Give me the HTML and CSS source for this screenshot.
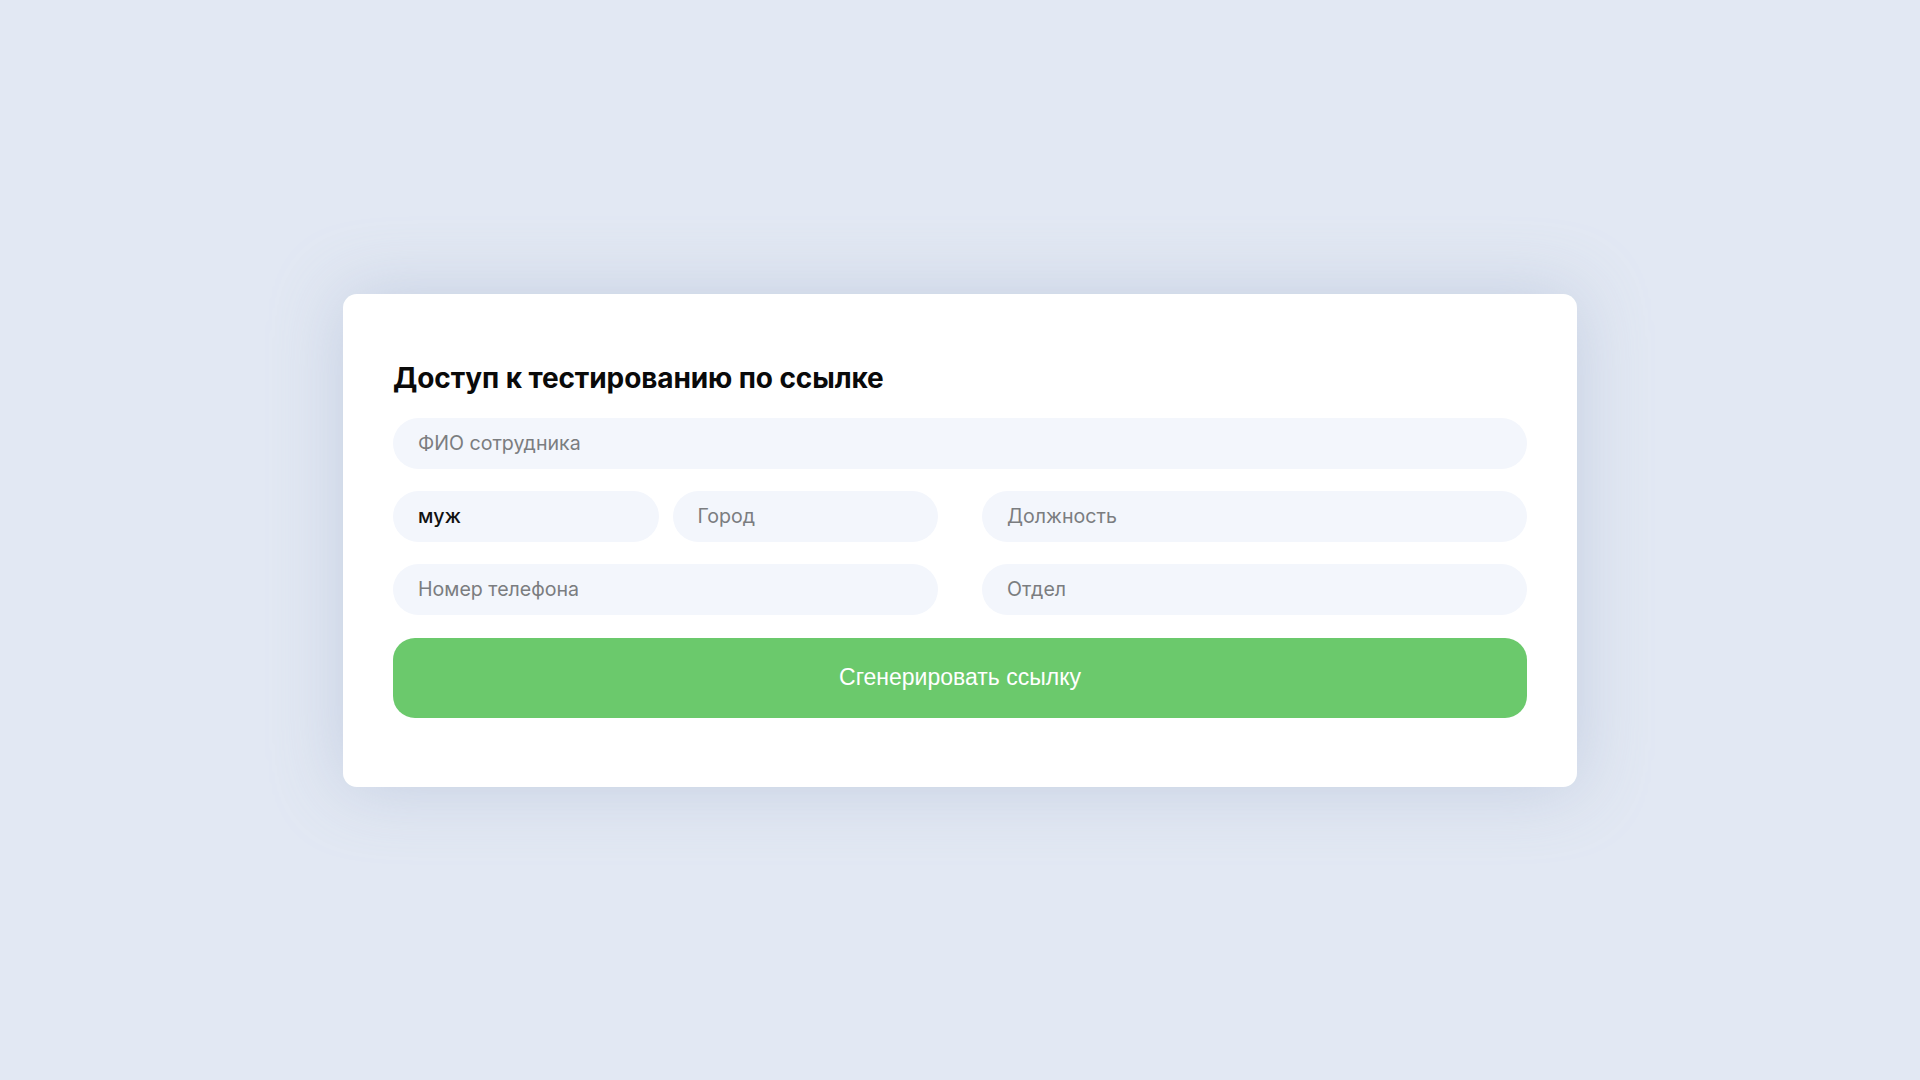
FILE: index.html
```html
<!DOCTYPE html>
<html lang="ru">
<head>
<meta charset="utf-8">
<title>Доступ к тестированию по ссылке</title>
<link rel="stylesheet" href="styles.css">
</head>
<body>
<main class="page">
  <section class="card">
    <h1 class="title">Доступ к тестированию по ссылке</h1>
    <form class="form">
      <input class="field field-wide" type="text" placeholder="ФИО сотрудника">
      <div class="pair">
        <div class="field select">муж</div>
        <input class="field" type="text" placeholder="Город">
      </div>
      <input class="field" type="text" placeholder="Должность">
      <input class="field" type="text" placeholder="Номер телефона">
      <input class="field" type="text" placeholder="Отдел">
      <button class="btn field-wide" type="button">Сгенерировать ссылку</button>
    </form>
  </section>
</main>
</body>
</html>
```
FILE: styles.css
```css
* { box-sizing: border-box; }
html, body { margin: 0; padding: 0; }
body {
  background: #e2e8f3;
  font-family: "Inter", "Noto Sans", sans-serif;
}
.page {
  width: 1920px;
  height: 1080px;
  display: flex;
  align-items: center;
  justify-content: center;
}
.card {
  width: 1234px;
  background: #ffffff;
  border-radius: 14px;
  padding: 68px 50px 69px;
  box-shadow: 0 0 70px rgba(160, 176, 205, 0.45);
}
.title {
  margin: 0 0 24px;
  font-size: 28px;
  line-height: 32px;
  font-weight: 700;
  color: #0a0a0a;
  letter-spacing: -0.1px;
}
.form {
  display: grid;
  grid-template-columns: 1fr 1fr;
  column-gap: 44px;
  row-gap: 22px;
}
.field-wide { grid-column: 1 / -1; }
.pair {
  display: grid;
  grid-template-columns: 1fr 1fr;
  column-gap: 14px;
}
.field {
  height: 51px;
  width: 100%;
  border: none;
  outline: none;
  border-radius: 26px;
  background: #f3f6fc;
  padding: 0 25px;
  font-family: "Inter", "Noto Sans", sans-serif;
  font-size: 19.6px;
  color: #111111;
  display: flex;
  align-items: center;
}
.field::placeholder { color: #7b7d80; }
.select { font-weight: 500; color: #111111; }
.btn {
  margin-top: 1px;
  height: 80px;
  border: none;
  border-radius: 22px;
  background: #6bc96c;
  color: #ffffff;
  font-family: "Liberation Sans", Arial, sans-serif;
  font-size: 23px;
  cursor: pointer;
}
```
